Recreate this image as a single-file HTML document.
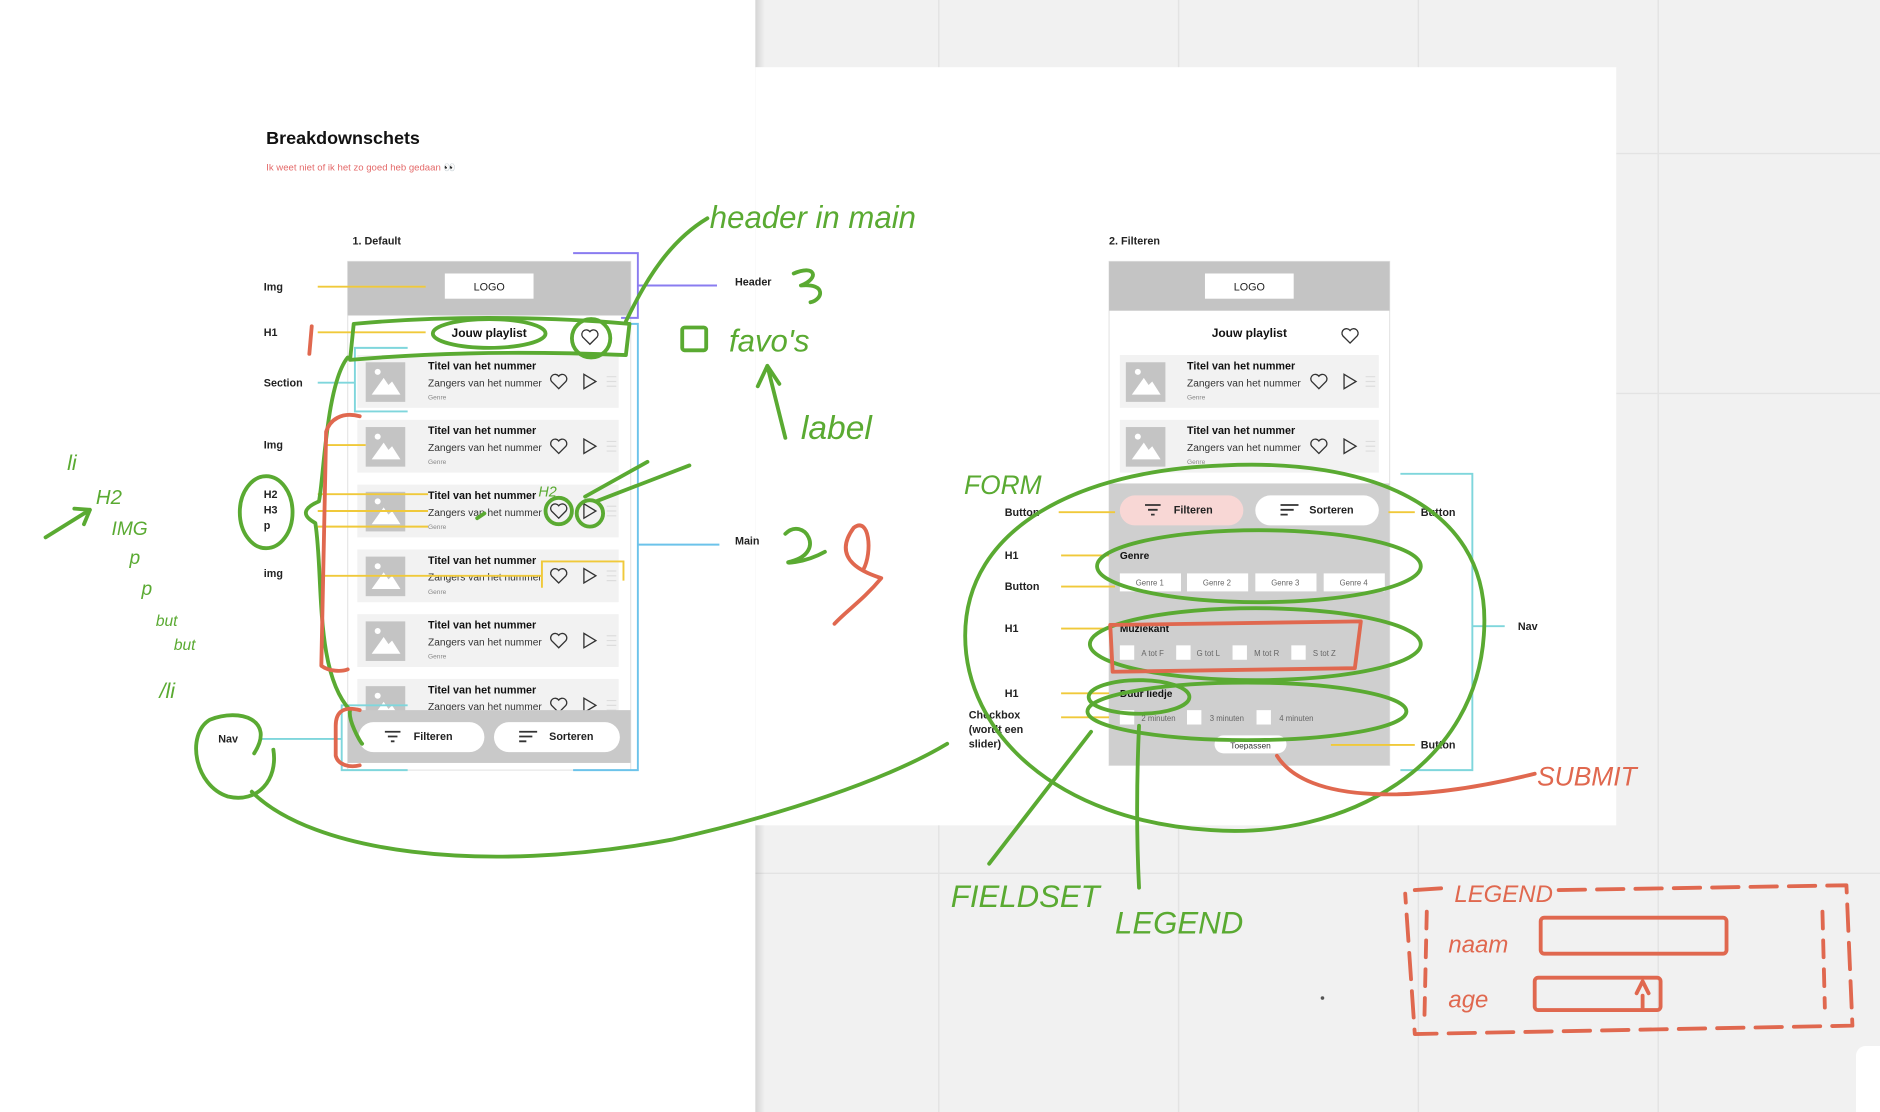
<!DOCTYPE html>
<html><head><meta charset="utf-8"><style>
html,body{margin:0;padding:0;width:1880px;height:1112px;overflow:hidden;background:#f1f1f1}
svg{display:block}
text{font-family:"Liberation Sans",sans-serif}
.hw{font-family:"DejaVu Sans",sans-serif;font-style:italic;fill:#5aaa32}
.hr{font-family:"DejaVu Sans",sans-serif;font-style:italic;fill:#e0684f}
</style></head><body>
<svg width="1880" height="1112" viewBox="0 0 1568 927" preserveAspectRatio="none" xmlns="http://www.w3.org/2000/svg">
<defs>
<linearGradient id="sh" x1="0" x2="1"><stop offset="0" stop-color="#000" stop-opacity=".12"/><stop offset="1" stop-color="#000" stop-opacity="0"/></linearGradient>
</defs>
<!-- background grid -->
<rect x="0" y="0" width="1568" height="927" fill="#f1f1f1"/>
<g stroke="#e3e3e3" stroke-width="1.2">
<line x1="783" y1="0" x2="783" y2="927"/><line x1="983" y1="0" x2="983" y2="927"/><line x1="1183" y1="0" x2="1183" y2="927"/><line x1="1383" y1="0" x2="1383" y2="927"/>
<line x1="630" y1="128" x2="1568" y2="128"/><line x1="630" y1="328" x2="1568" y2="328"/><line x1="630" y1="728" x2="1568" y2="728"/>
</g>
<rect x="0" y="0" width="630" height="927" fill="#fff"/>
<rect x="630" y="0" width="8" height="927" fill="url(#sh)"/>
<rect x="630" y="56" width="718" height="632" fill="#fff"/>
<rect x="1548" y="872" width="30" height="70" rx="8" fill="#fff"/>

<!-- titles -->
<text x="222" y="120" font-size="15" font-weight="bold" fill="#111">Breakdownschets</text>
<text x="222" y="142" font-size="8" fill="#e46a6a">Ik weet niet of ik het zo goed heb gedaan 👀</text>
<text x="294" y="204" font-size="9" font-weight="bold" fill="#222">1. Default</text>
<text x="925" y="204" font-size="9" font-weight="bold" fill="#222">2. Filteren</text>

<!-- PHONE 1 -->
<rect x="290" y="218" width="236" height="424" fill="#fff" stroke="#e6e6e6"/>
<rect x="290" y="218" width="236" height="45" fill="#c4c4c4"/>
<rect x="371" y="228" width="74" height="21" fill="#fff"/>
<text x="408" y="242" font-size="9" text-anchor="middle" fill="#222">LOGO</text>
<text x="408" y="281" font-size="10" font-weight="bold" text-anchor="middle" fill="#111">Jouw playlist</text>
<path d="M492 287 l-6-6 a3.4 3.4 0 0 1 6-4.5 a3.4 3.4 0 0 1 6 4.5 z" fill="none" stroke="#333" stroke-width="1.1"/>

<g id="c1">
<rect x="298" y="296" width="218" height="44" fill="#f2f2f2"/>
<rect x="305" y="302" width="33" height="33" fill="#c4c4c4"/>
<circle cx="315" cy="310" r="2.5" fill="#fff"/>
<polygon points="310,329 320,315 324,321 327,318 334,329" fill="#fff"/>
<path d="M466 324 l-6-6 a3.3 3.3 0 0 1 6-4.4 a3.3 3.3 0 0 1 6 4.4 z" fill="none" stroke="#333" stroke-width="1.1"/>
<path d="M487 312 l10 6 l-10 6 z" fill="none" stroke="#333" stroke-width="1.1"/>
<path d="M506 314h8M506 318h8M506 322h8" stroke="#ddd"/>
</g>
<use href="#c1" y="54"/><use href="#c1" y="108"/><use href="#c1" y="162"/><use href="#c1" y="216"/><use href="#c1" y="270"/>
<g font-size="9" fill="#111">
<text x="357" y="308" font-weight="bold">Titel van het nummer</text><text x="357" y="322" font-size="8.5" fill="#333">Zangers van het nummer</text><text x="357" y="333" font-size="5.5" fill="#888">Genre</text>
<text x="357" y="362" font-weight="bold">Titel van het nummer</text><text x="357" y="376" font-size="8.5" fill="#333">Zangers van het nummer</text><text x="357" y="387" font-size="5.5" fill="#888">Genre</text>
<text x="357" y="416" font-weight="bold">Titel van het nummer</text><text x="357" y="430" font-size="8.5" fill="#333">Zangers van het nummer</text><text x="357" y="441" font-size="5.5" fill="#888">Genre</text>
<text x="357" y="470" font-weight="bold">Titel van het nummer</text><text x="357" y="484" font-size="8.5" fill="#333">Zangers van het nummer</text><text x="357" y="495" font-size="5.5" fill="#888">Genre</text>
<text x="357" y="524" font-weight="bold">Titel van het nummer</text><text x="357" y="538" font-size="8.5" fill="#333">Zangers van het nummer</text><text x="357" y="549" font-size="5.5" fill="#888">Genre</text>
<text x="357" y="578" font-weight="bold">Titel van het nummer</text><text x="357" y="592" font-size="8.5" fill="#333">Zangers van het nummer</text>
</g>
<rect x="290" y="592" width="236" height="44" fill="#c9c9c9"/>
<rect x="299" y="602" width="105" height="25" rx="12.5" fill="#fff"/>
<rect x="412" y="602" width="105" height="25" rx="12.5" fill="#fff"/>
<path d="M321 610h13M323.5 614h8M326 618h3" stroke="#333" stroke-width="1.5"/>
<path d="M433 610h15M433 614h11M433 618h6" stroke="#333" stroke-width="1.5"/>
<text x="345" y="617" font-size="9" font-weight="bold" fill="#222">Filteren</text>
<text x="458" y="617" font-size="9" font-weight="bold" fill="#222">Sorteren</text>

<!-- PHONE 2 -->
<rect x="925" y="218" width="234" height="420" fill="#fff" stroke="#e6e6e6"/>
<rect x="925" y="218" width="234" height="41" fill="#c4c4c4"/>
<rect x="1005" y="228" width="74" height="21" fill="#fff"/>
<text x="1042" y="242" font-size="9" text-anchor="middle" fill="#222">LOGO</text>
<text x="1042" y="281" font-size="10" font-weight="bold" text-anchor="middle" fill="#111">Jouw playlist</text>
<path d="M1126 286 l-6-6 a3.4 3.4 0 0 1 6-4.5 a3.4 3.4 0 0 1 6 4.5 z" fill="none" stroke="#333" stroke-width="1.1"/>
<g id="c2">
<rect x="934" y="296" width="216" height="44" fill="#f2f2f2"/>
<rect x="939" y="302" width="33" height="33" fill="#c4c4c4"/>
<circle cx="949" cy="310" r="2.5" fill="#fff"/>
<polygon points="944,329 954,315 958,321 961,318 968,329" fill="#fff"/>
<path d="M1100 324 l-6-6 a3.3 3.3 0 0 1 6-4.4 a3.3 3.3 0 0 1 6 4.4 z" fill="none" stroke="#333" stroke-width="1.1"/>
<path d="M1121 312 l10 6 l-10 6 z" fill="none" stroke="#333" stroke-width="1.1"/>
<path d="M1139 314h8M1139 318h8M1139 322h8" stroke="#ddd"/>
</g>
<use href="#c2" y="54"/>
<g font-size="9" fill="#111">
<text x="990" y="308" font-weight="bold">Titel van het nummer</text><text x="990" y="322" font-size="8.5" fill="#333">Zangers van het nummer</text><text x="990" y="333" font-size="5.5" fill="#888">Genre</text>
<text x="990" y="362" font-weight="bold">Titel van het nummer</text><text x="990" y="376" font-size="8.5" fill="#333">Zangers van het nummer</text><text x="990" y="387" font-size="5.5" fill="#888">Genre</text>
</g>
<rect x="925" y="403" width="234" height="235" fill="#cfcfcf"/>
<rect x="934" y="413" width="103" height="25" rx="12.5" fill="#f8d7d5"/>
<rect x="1047" y="413" width="103" height="25" rx="12.5" fill="#fff"/>
<path d="M955 421h13M957.5 425h8M960 429h3" stroke="#333" stroke-width="1.5"/>
<path d="M1068 421h15M1068 425h11M1068 429h6" stroke="#333" stroke-width="1.5"/>
<text x="979" y="428" font-size="9" font-weight="bold" fill="#222">Filteren</text>
<text x="1092" y="428" font-size="9" font-weight="bold" fill="#222">Sorteren</text>
<text x="934" y="466" font-size="8.5" font-weight="bold" fill="#111">Genre</text>
<g font-size="6.5" fill="#666" text-anchor="middle">
<rect x="934" y="478" width="51" height="15" fill="#fff"/><text x="959" y="488">Genre 1</text>
<rect x="990" y="478" width="51" height="15" fill="#fff"/><text x="1015" y="488">Genre 2</text>
<rect x="1047" y="478" width="51" height="15" fill="#fff"/><text x="1072" y="488">Genre 3</text>
<rect x="1104" y="478" width="51" height="15" fill="#fff"/><text x="1129" y="488">Genre 4</text>
</g>
<text x="934" y="527" font-size="8.5" font-weight="bold" fill="#111">Muziekant</text>
<g fill="#fff"><rect x="934" y="538" width="12" height="12"/><rect x="981" y="538" width="12" height="12"/><rect x="1028" y="538" width="12" height="12"/><rect x="1077" y="538" width="12" height="12"/>
<rect x="934" y="592" width="12" height="12"/><rect x="990" y="592" width="12" height="12"/><rect x="1048" y="592" width="12" height="12"/></g>
<g font-size="6.5" fill="#666"><text x="952" y="547">A tot F</text><text x="998" y="547">G tot L</text><text x="1046" y="547">M tot R</text><text x="1095" y="547">S tot Z</text>
<text x="952" y="601">2 minuten</text><text x="1009" y="601">3 minuten</text><text x="1067" y="601">4 minuten</text></g>
<text x="934" y="581" font-size="8.5" font-weight="bold" fill="#111">Duur liedje</text>
<rect x="1013" y="613" width="60" height="15" rx="7.5" fill="#fff"/>
<text x="1043" y="624" font-size="7" text-anchor="middle" fill="#333">Toepassen</text>

<!-- labels -->
<g font-size="9" font-weight="bold" fill="#222">
<text x="220" y="242">Img</text><text x="220" y="280">H1</text><text x="220" y="322">Section</text><text x="220" y="374">Img</text>
<text x="220" y="415">H2</text><text x="220" y="428">H3</text><text x="220" y="441">p</text><text x="220" y="481">img</text><text x="182" y="619">Nav</text>
<text x="613" y="238">Header</text><text x="613" y="454">Main</text>
<text x="838" y="430">Button</text><text x="838" y="466">H1</text><text x="838" y="492">Button</text><text x="838" y="527">H1</text><text x="838" y="581">H1</text>
<text x="808" y="599">Checkbox</text><text x="808" y="611">(wordt een</text><text x="808" y="623">slider)</text>
<text x="1185" y="430">Button</text><text x="1266" y="525">Nav</text><text x="1185" y="624">Button</text>
</g>
<g stroke="#f0c93a" stroke-width="1.6" fill="none">
<path d="M265 239H355M265 277H355M272 371H305M265 412H357M265 426H357M265 439H357M268 480H452M452 490V468H520V484"/>
<path d="M883 427H930M885 463H925M885 489H930M885 524H925M885 578H925M885 598H925M1158 427H1180M1110 621H1180"/>
</g>
<g stroke="#7fd6dc" stroke-width="1.6" fill="none">
<path d="M340 290H296V343H340M265 319H296M218 616H285M340 588H285V642H340M1168 395H1228V642H1168M1228 522H1255"/>
</g>
<path d="M518 270H532V642H478M532 454H600" stroke="#6cc3ea" stroke-width="1.6" fill="none"/>
<path d="M478 211H532V265H518M532 238H598" stroke="#8a7cf0" stroke-width="1.6" fill="none"/>

<!-- green annotations -->
<g stroke="#5aaa32" stroke-width="3.2" fill="none" stroke-linecap="round" stroke-linejoin="round">
<path d="M522 268 C540 230 560 200 590 182"/>
<path d="M662 228 C680 220 684 232 668 238 C690 236 686 250 676 252"/>
<rect x="569" y="273" width="20" height="19" rx="2"/>
<path d="M655 365 L640 305 M632 322 L640 305 L650 320"/>
<path d="M292 300 L295 270 C380 262 470 265 525 270 L522 296 C420 292 350 295 292 300"/>
<ellipse cx="408" cy="278" rx="47" ry="12"/>
<circle cx="493" cy="282" r="16"/>
<path d="M290 298 C272 320 270 400 266 418 C252 424 252 430 263 436 C270 480 262 560 292 592 C290 600 300 618 302 620"/>
<ellipse cx="222" cy="427" rx="22" ry="30"/>
<path d="M38 448 L75 425 M62 424 L75 425 L70 437"/>
<path d="M212 628 C230 600 200 590 175 600 C155 612 162 655 190 664 C215 670 232 650 228 625"/>
<path d="M210 660 C260 710 400 730 560 700 C650 680 740 650 790 620"/>
<circle cx="466" cy="426" r="11"/><circle cx="492" cy="428" r="11"/>
<path d="M497 418 L575 388 M488 414 L540 385 M398 432 L404 428"/>
<path d="M655 445 C670 430 690 460 660 468 C650 470 670 470 688 460"/>
<path d="M1020 388 C1140 382 1240 420 1238 520 C1236 640 1120 700 1010 692 C880 684 805 610 805 530 C805 440 900 392 1020 388"/>
<ellipse cx="1050" cy="472" rx="135" ry="30"/>
<ellipse cx="1047" cy="537" rx="138" ry="30"/>
<ellipse cx="1040" cy="593" rx="133" ry="24"/>
<ellipse cx="950" cy="581" rx="42" ry="14"/>
<path d="M910 610 L825 720 M950 605 C948 650 948 700 950 740"/>
</g>
<g class="hw">
<text x="592" y="190" font-size="26">header in main</text>
<text x="608" y="293" font-size="26">favo's</text>
<text x="668" y="366" font-size="28">label</text>
<text x="56" y="392" font-size="18">li</text>
<text x="80" y="420" font-size="17">H2</text>
<text x="93" y="446" font-size="16">IMG</text>
<text x="108" y="470" font-size="16">p</text>
<text x="118" y="496" font-size="16">p</text>
<text x="130" y="522" font-size="13">but</text>
<text x="145" y="542" font-size="13">but</text>
<text x="133" y="582" font-size="18">/li</text>
<text x="449" y="414" font-size="12">H2</text>
<text x="804" y="412" font-size="22">FORM</text>
<text x="793" y="756" font-size="26">FIELDSET</text>
<text x="930" y="778" font-size="26">LEGEND</text>
</g>
<!-- red annotations -->
<g stroke="#e0684f" stroke-width="3.2" fill="none" stroke-linecap="round" stroke-linejoin="round">
<path d="M260 272 L258 295"/>
<path d="M300 347 C285 343 275 350 272 360 L268 555 C275 560 285 560 290 558"/>
<path d="M300 592 C285 588 280 595 280 605 L280 630 C282 638 292 640 300 638"/>
<path d="M712 440 C690 470 730 480 735 482 C720 500 705 510 696 520 M712 440 C725 430 728 460 720 475"/>
<path d="M926 521 L1135 518 L1130 557 L928 560 Z"/>
<path d="M1065 630 C1090 670 1180 670 1280 645"/>
<path d="M1180 742 L1210 740 M1300 742 L1540 738 L1545 855 L1180 862 L1172 745" stroke-dasharray="22 10"/>
<path d="M1190 760 L1188 850 M1520 760 L1522 840" stroke-dasharray="14 10"/>
<rect x="1285" y="765" width="155" height="30" rx="3"/>
<rect x="1280" y="815" width="105" height="27" rx="3"/>
<path d="M1365 828 L1370 818 L1375 828 M1370 830 V840"/>
</g>
<circle cx="1103" cy="832" r="1.5" fill="#555"/>
<g class="hr">
<text x="1282" y="655" font-size="22">SUBMIT</text>
<text x="1213" y="752" font-size="20">LEGEND</text>
<text x="1208" y="794" font-size="20">naam</text>
<text x="1208" y="840" font-size="20">age</text>
</g>
</svg>
</body></html>
